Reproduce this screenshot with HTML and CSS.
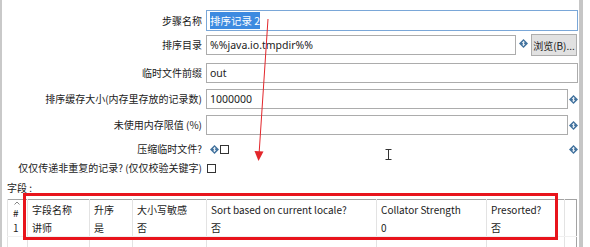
FILE: index.html
```html
<!DOCTYPE html>
<html lang="zh-CN">
<head>
<meta charset="UTF-8" />
<meta name="viewport" content="width=device-width, initial-scale=1" />
<title>排序记录</title>
<link rel="stylesheet" href="styles.css">
</head>
<body>
<div class="dialog">
  <div class="form">
    <div class="row r1">
      <span class="lbl">步骤名称</span>
      <div class="box focus"><span class="sel">排序记录 2</span></div>
    </div>
    <div class="row r2">
      <span class="lbl">排序目录</span>
      <div class="field">
        <div class="box">%%java.io.tmpdir%%</div>
        <svg class="var" viewBox="0 0 10 10"><polygon points="5,0 10,5 5,10 0,5" fill="#42729e"/><path d="M6.3 3.6 Q5 2.8 4 3.6 Q3.6 4.6 5 5 Q6.4 5.4 6 6.4 Q5 7.2 3.7 6.4 M5 2.4 V7.6" stroke="#fff" stroke-width="0.9" fill="none"/></svg>
        <button class="btn">浏览(B)...</button>
      </div>
    </div>
    <div class="row r3">
      <span class="lbl">临时文件前缀</span>
      <div class="box">out</div>
    </div>
    <div class="row r4">
      <span class="lbl">排序缓存大小(内存里存放的记录数)</span>
      <div class="field">
        <div class="box">1000000</div>
        <svg class="var" viewBox="0 0 10 10"><polygon points="5,0 10,5 5,10 0,5" fill="#42729e"/><path d="M6.3 3.6 Q5 2.8 4 3.6 Q3.6 4.6 5 5 Q6.4 5.4 6 6.4 Q5 7.2 3.7 6.4 M5 2.4 V7.6" stroke="#fff" stroke-width="0.9" fill="none"/></svg>
      </div>
    </div>
    <div class="row r5">
      <span class="lbl">未使用内存限值 (%)</span>
      <div class="field">
        <div class="box"></div>
        <svg class="var" viewBox="0 0 10 10"><polygon points="5,0 10,5 5,10 0,5" fill="#42729e"/><path d="M6.3 3.6 Q5 2.8 4 3.6 Q3.6 4.6 5 5 Q6.4 5.4 6 6.4 Q5 7.2 3.7 6.4 M5 2.4 V7.6" stroke="#fff" stroke-width="0.9" fill="none"/></svg>
      </div>
    </div>
    <div class="row r6">
      <span class="lbl">压缩临时文件?</span>
      <div class="field">
        <svg class="var small" viewBox="0 0 10 10"><polygon points="5,0 10,5 5,10 0,5" fill="#42729e"/><path d="M6.3 3.6 Q5 2.8 4 3.6 Q3.6 4.6 5 5 Q6.4 5.4 6 6.4 Q5 7.2 3.7 6.4 M5 2.4 V7.6" stroke="#fff" stroke-width="0.9" fill="none"/></svg>
        <span class="check"></span>
        <span class="spacer"></span>
        <svg class="var" viewBox="0 0 10 10"><polygon points="5,0 10,5 5,10 0,5" fill="#42729e"/><path d="M6.3 3.6 Q5 2.8 4 3.6 Q3.6 4.6 5 5 Q6.4 5.4 6 6.4 Q5 7.2 3.7 6.4 M5 2.4 V7.6" stroke="#fff" stroke-width="0.9" fill="none"/></svg>
      </div>
    </div>
    <div class="row r7">
      <span class="lbl">仅仅传递非重复的记录? (仅仅校验关键字)</span>
      <div class="field"><span class="check"></span></div>
    </div>
  </div>

  <div class="fields-title">字段 :</div>

  <table class="grid">
    <colgroup>
      <col style="width:20px"><col style="width:62px"><col style="width:43px"><col style="width:74px">
      <col style="width:170px"><col style="width:110px"><col style="width:78px"><col>
    </colgroup>
    <thead>
      <tr>
        <th class="num">
          <svg class="sort" viewBox="0 0 6 4" width="6" height="4"><path d="M0.5 3.5 L3 1 L5.5 3.5" stroke="#777" stroke-width="0.9" fill="none"/></svg>
          <span class="hash">#</span>
        </th>
        <th>字段名称</th>
        <th>升序</th>
        <th>大小写敏感</th>
        <th>Sort based on current locale?</th>
        <th>Collator Strength</th>
        <th>Presorted?</th>
        <th></th>
      </tr>
    </thead>
    <tbody>
      <tr>
        <td class="num">1</td>
        <td>讲师</td>
        <td>是</td>
        <td>否</td>
        <td>否</td>
        <td>0</td>
        <td>否</td>
        <td></td>
      </tr>
      <tr class="empty">
        <td></td><td></td><td></td><td></td><td></td><td></td><td></td><td></td>
      </tr>
    </tbody>
  </table>

  <!-- 标注 -->
  <div class="mark-box"></div>
  <svg class="arrow" viewBox="0 0 590 247" width="590" height="247">
    <line x1="268" y1="19" x2="259.2" y2="152" stroke="#e3262b" stroke-width="1"/>
    <polygon points="254.5,151 263.5,151.6 258.5,161" fill="#e3262b"/>
  </svg>
  <svg class="ibeam" viewBox="0 0 7 11" width="7" height="11">
    <path d="M0.5 0.5 H6.5 M3.5 0.5 V10.5 M0.5 10.5 H6.5" stroke="#333" stroke-width="1" fill="none"/>
  </svg>
</div>
</body>
</html>
```

FILE: styles.css
```css
body {
  margin: 0;
  background: #fff;
  font-family: "Noto Sans CJK SC", "Noto Sans", sans-serif;
  font-size: 10px;
  color: #1b1b1b;
}
.dialog {
  position: relative;
  width: 577px;
  height: 247px;
  border-left: 2px solid #c9c9c9;
  border-right: 4px solid #c6c6c6;
  overflow: hidden;
}
.form {
  padding-top: 10px;
  padding-right: 1px;
}
.row {
  display: grid;
  grid-template-columns: 200px 1fr;
  column-gap: 4px;
  align-items: center;
}
.lbl {
  text-align: right;
  white-space: nowrap;
  line-height: 12px;
}
.field {
  display: flex;
  align-items: center;
}
.box {
  box-sizing: border-box;
  flex: 1;
  height: 20px;
  border: 1px solid #acacac;
  background: #fff;
  padding: 0 3px;
  font-family: "Noto Sans", "Noto Sans CJK SC", sans-serif;
  font-size: 10.5px;
  line-height: 18px;
  white-space: nowrap;
}
.box.focus {
  height: 21px;
  line-height: 19px;
  border-color: #7aa7d8;
  font-family: "Noto Sans CJK SC", sans-serif;
  font-size: 10.5px;
}
.sel {
  background: #3d8ae0;
  color: #fff;
  padding: 1px 0;
}
.r2 { margin-top: 3px; }
.r3 { margin-top: 7px; }
.r4 { margin-top: 6px; }
.r5 { margin-top: 6px; }
.r6 { margin-top: 8px; height: 12px; }
.r7 { margin-top: 7px; height: 12px; }
.r4 .box, .r5 .box { margin-right: 1px; }
.var {
  width: 9px;
  height: 9px;
  flex: none;
}
.r2 .var { margin: -4px 3px 0 3px; }
.r6 .var.small { margin-left: 4px; margin-right: 1px; }
.spacer { flex: 1; }
.btn {
  box-sizing: border-box;
  height: 22px;
  width: 46px;
  margin-right: 1px;
  padding: 0;
  border: 1px solid #adadad;
  background: #e1e1e1;
  font-family: inherit;
  font-size: 10px;
  color: #1b1b1b;
}
.check {
  box-sizing: border-box;
  width: 9px;
  height: 9px;
  border: 1px solid #333;
  background: #fff;
  flex: none;
}
.r7 .check { margin-left: 1px; }
.fields-title {
  margin: 7px 0 0 5px;
  line-height: 14px;
}
.grid {
  margin: 4px 0 0 5px;
  width: 570px;
  table-layout: fixed;
  border-collapse: collapse;
  border: 1px solid #a3a3a3;
  font-size: 10px;
}
.grid th, .grid td {
  border-left: 1px solid #e3e3e3;
  text-align: left;
  font-weight: normal;
  padding: 0 0 0 4px;
  white-space: nowrap;
  overflow: hidden;
}
.grid th {
  height: 19px;
  vertical-align: middle;
}
.grid td {
  height: 17px;
  border-bottom: 1px solid #f0f0f0;
}
.grid .num {
  position: relative;
  padding-left: 5px;
}
.grid th.num {
  vertical-align: bottom;
  line-height: 13px;
}
.sort {
  position: absolute;
  left: 6px;
  top: 1px;
}
.grid .empty td { height: 16px; }
.mark-box {
  position: absolute;
  left: 21px;
  top: 193px;
  width: 529px;
  height: 41px;
  border: 3px solid #e8141c;
}
.arrow {
  position: absolute;
  left: -2px;
  top: 0;
  pointer-events: none;
}
.ibeam {
  position: absolute;
  left: 383px;
  top: 149px;
}
```
